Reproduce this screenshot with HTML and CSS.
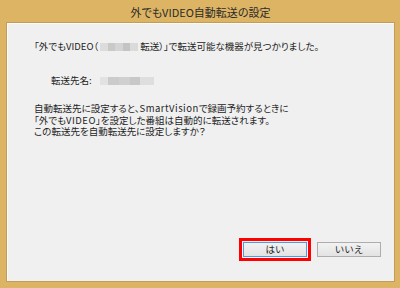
FILE: index.html
```html
<!DOCTYPE html>
<html lang="ja">

<head>
    <meta charset="UTF-8">
    <title>外でもVIDEO自動転送の設定</title>
    <link rel="stylesheet" href="styles.css">
</head>

<body>
    <div class="window">
        <div class="title-bar">外でもVIDEO自動転送の設定</div>
        <div class="client">
            <p class="msg">「外でもVIDEO（<span class="blur b1"></span>転送）」で転送可能な機器が見つかりました。</p>
            <p class="dest">転送先名:<span class="blur b2"></span></p>
            <p class="note">自動転送先に設定すると、<span class="latin">SmartVision</span>で録画予約するときに<br>「外でも<span class="latin">VIDEO</span>」を設定した番組は自動的に転送されます。<br>この転送先を自動転送先に設定しますか？</p>
            <div class="btn-row">
                <button class="btn focus">はい</button>
                <button class="btn">いいえ</button>
            </div>
        </div>
    </div>
</body>

</html>
```

FILE: styles.css
```css
* {
    margin: 0;
    padding: 0;
    box-sizing: border-box;
}

body {
    background-color: #ddb463;
    font-family: "Noto Sans CJK JP", sans-serif;
    color: #1e1e1e;
}

.window {
    width: 400px;
    height: 288px;
    padding: 0 5px 6px 6px;
    display: flex;
    flex-direction: column;
    background-color: #ddb463;
}

.title-bar {
    height: 22px;
    line-height: 25px;
    text-align: center;
    font-size: 11px;
    color: #2b2b2b;
    font-feature-settings: "palt";
}

.client {
    flex: 1;
    background-color: #f0f0f0;
    border: 1px solid #c29d55;
    box-shadow: inset 1px 1px 0 #fbfbfb;
    padding: 16px 0 0 27px;
    display: flex;
    flex-direction: column;
    font-size: 9.5px;
    font-feature-settings: "palt";
}

.msg {
    line-height: 14px;
}

.dest {
    margin-top: 20px;
    padding-left: 17px;
    line-height: 14px;
}

.note {
    margin-top: 16px;
    line-height: 11.5px;
}

.latin {
    letter-spacing: 0.5px;
}

.blur {
    display: inline-block;
    height: 8px;
    vertical-align: -1px;
    background: linear-gradient(90deg, #dcdcdc 0 20%, #c9c9c9 20% 40%, #d4d4d4 40% 60%, #c4c4c4 60% 80%, #dadada 80%);
}

.b1 {
    width: 38px;
    margin: 0 2px;
}

.b2 {
    width: 54px;
    margin-left: 8px;
    background: linear-gradient(90deg, #e2e2e2 0 15%, #cbcbcb 15% 35%, #d0d0d0 35% 55%, #c8c8c8 55% 75%, #dedede 75%);
}

.btn-row {
    margin-top: auto;
    margin-bottom: 24px;
    display: flex;
    justify-content: flex-end;
    gap: 10px;
    padding-right: 13px;
}

.btn {
    width: 64px;
    height: 15px;
    font-family: "Noto Sans CJK JP", sans-serif;
    font-size: 9.5px;
    line-height: 13px;
    color: #1e1e1e;
    border: 1px solid #adadad;
    background: linear-gradient(#f2f2f2, #e3e3e3);
}

.btn.focus {
    border-color: #4d9de0;
    outline: 3px solid #ff0000;
    outline-offset: 1px;
}
```
